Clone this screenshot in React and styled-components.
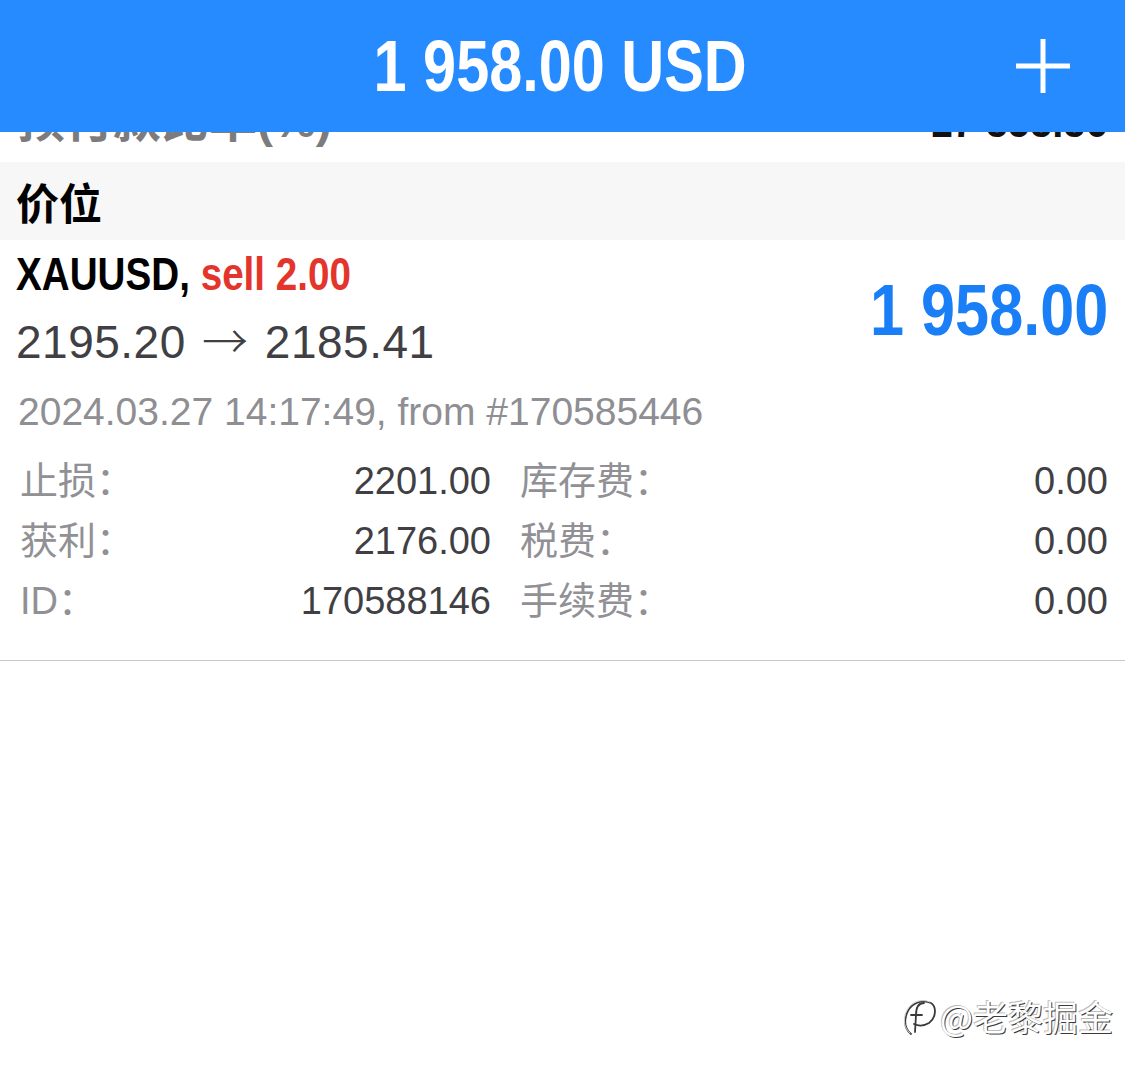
import React from 'react';
import styled, { createGlobalStyle } from 'styled-components';

const GlobalStyle = createGlobalStyle`
  html, body {
    margin: 0;
    padding: 0;
    background: #ffffff;
  }
  body {
    width: 1125px;
    height: 1071px;
    overflow: hidden;
    font-family: "Liberation Sans", "Noto Sans CJK SC", sans-serif;
  }
`;

const cjk = `"Liberation Sans", "Noto Sans CJK SC", sans-serif`;

// no condensed face is installed, so bold Liberation Sans is squeezed horizontally
const Condensed = styled.span`
  display: inline-block;
  font-family: "Liberation Sans", sans-serif;
  font-weight: 700;
  white-space: nowrap;
  transform: scaleX(${(p) => p.$x || 0.83});
  transform-origin: ${(p) => p.$origin || 'left'} center;
`;

const Page = styled.div`
  position: relative;
  width: 1125px;
  height: 1071px;
  background: #ffffff;
`;

const Header = styled.header`
  display: grid;
  grid-template-columns: 1fr auto 1fr;
  align-items: center;
  height: 132px;
  background: #268bff;
  color: #ffffff;
`;

const Title = styled.h1`
  grid-column: 2;
  margin: 0;
  font-size: 72px;
  font-weight: 700;
  line-height: 132px;
  transform: translateX(-2px);
`;

const AddButton = styled.button`
  grid-column: 3;
  justify-self: end;
  margin-right: 55px;
  width: 54px;
  height: 54px;
  padding: 0;
  border: none;
  background: transparent;
  color: #ffffff;
  display: flex;
  cursor: pointer;
`;

const ClippedRow = styled.div`
  height: 30px;
  overflow: hidden;
  background: #ffffff;
`;

const ClippedInner = styled.div`
  display: flex;
  justify-content: space-between;
  margin-top: -41px;
  padding: 0 17px;
  height: 60px;
  line-height: 60px;
`;

const ClippedLabel = styled.span`
  font-family: ${cjk};
  font-weight: 700;
  font-size: 48px;
  color: #7c7c7c;
`;

const ClippedValue = styled.span`
  font-size: 48px;
  color: #111111;
`;

const SectionHeader = styled.div`
  height: 78px;
  line-height: 78px;
  padding-left: 16px;
  background: #f7f7f7;
  font-family: "Noto Sans CJK SC", sans-serif;
  font-weight: 700;
  font-size: 43px;
  color: #000000;
`;

const Position = styled.section`
  padding: 2px 17px 29px 0;
  border-bottom: 1px solid #c8c8cc;
`;

const TopRow = styled.div`
  display: flex;
  justify-content: space-between;
  align-items: center;
  padding-left: 16px;
`;

const Lines = styled.div`
  display: flex;
  flex-direction: column;
`;

const SymbolLine = styled.div`
  font-size: 46px;
  line-height: 64px;
  color: #000000;
`;

const Side = styled.span`
  color: ${(p) => (p.$sell ? '#e3352b' : '#1a7ef7')};
`;

const PriceLine = styled.div`
  font-size: 46px;
  line-height: 64px;
  letter-spacing: 0.5px;
  color: #3f3f44;
`;

const Arrow = styled.span`
  font-family: "Noto Sans CJK SC", sans-serif;
  font-weight: 300;
  margin: 0 3px;
`;

const Profit = styled.div`
  font-size: 72px;
  line-height: 128px;
  padding-top: 4px;
  color: #1a7ef7;
`;

const DateLine = styled.div`
  margin-top: 13px;
  padding-left: 18px;
  font-size: 39px;
  line-height: 50px;
  color: #8e8e93;
`;

const Details = styled.div`
  display: grid;
  grid-template-columns: 471px 1fr;
  column-gap: 29px;
  margin-top: 14px;
  padding-left: 20px;
`;

const Field = styled.div`
  display: flex;
  justify-content: space-between;
  height: 60px;
  line-height: 60px;
  font-size: 38px;
`;

const Label = styled.span`
  font-family: ${cjk};
  color: #909095;
`;

const Value = styled.span`
  color: #3f3f44;
`;

const Watermark = styled.div`
  position: absolute;
  right: 12px;
  top: 990px;
  display: flex;
  align-items: center;
  gap: 2px;
  font-family: "Noto Sans CJK SC", sans-serif;
  font-size: 35px;
  color: #ffffff;
  text-shadow: 1px 1px 0 #3a3a3a, -1px -1px 0 #bdbdbd;
`;

const PlusIcon = () => (
  <svg width="54" height="54" viewBox="0 0 54 54" fill="none" stroke="currentColor" strokeWidth="5">
    <line x1="27" y1="0" x2="27" y2="54" />
    <line x1="0" y1="27" x2="54" y2="27" />
  </svg>
);

const LogoMark = () => (
  <svg width="36" height="44" viewBox="0 0 36 44" fill="none" strokeLinecap="round">
    <g stroke="#3a3a3a" strokeWidth="1.8">
      <path d="M9 40 C3 35 2 27 5 19 C9 9 20 5 29 9 C35 13 34 24 27 29 C22 32 16 32 12 30" />
      <path d="M22 9 C16 9 14 14 14 21 L13 38" />
      <path d="M9 21 L20 21" />
    </g>
    <g stroke="#d0d0d0" strokeWidth="1">
      <path d="M8 39 C2 34 1 26 4 18 C8 8 19 4 28 8" />
    </g>
  </svg>
);

const details = [
  ['止损：', '2201.00'],
  ['库存费：', '0.00'],
  ['获利：', '2176.00'],
  ['税费：', '0.00'],
  ['ID：', '170588146'],
  ['手续费：', '0.00'],
];

const App = () => {
  return (
    <Page>
      <GlobalStyle />
      <Header>
        <Title>
          <Condensed $x={0.825} $origin="center">1 958.00 USD</Condensed>
        </Title>
        <AddButton aria-label="add">
          <PlusIcon />
        </AddButton>
      </Header>

      <ClippedRow>
        <ClippedInner>
          <ClippedLabel>预付款比率(%)</ClippedLabel>
          <ClippedValue>
            <Condensed $origin="right">17 858.86</Condensed>
          </ClippedValue>
        </ClippedInner>
      </ClippedRow>

      <SectionHeader>价位</SectionHeader>

      <Position>
        <TopRow>
          <Lines>
            <SymbolLine>
              <Condensed $x={0.84}>
                XAUUSD, <Side $sell>sell 2.00</Side>
              </Condensed>
            </SymbolLine>
            <PriceLine>
              2195.20 <Arrow>→</Arrow> 2185.41
            </PriceLine>
          </Lines>
          <Profit>
            <Condensed $x={0.85} $origin="right">1 958.00</Condensed>
          </Profit>
        </TopRow>
        <DateLine>2024.03.27 14:17:49, from #170585446</DateLine>
        <Details>
          {details.map(([label, value]) => (
            <Field key={label}>
              <Label>{label}</Label>
              <Value>{value}</Value>
            </Field>
          ))}
        </Details>
      </Position>

      <Watermark>
        <LogoMark />
        <span>@老黎掘金</span>
      </Watermark>
    </Page>
  );
};

export default App;
